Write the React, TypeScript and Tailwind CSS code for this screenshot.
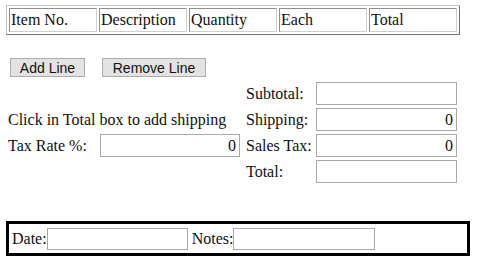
const headers = ["Item No.", "Description", "Quantity", "Each", "Total"];

function Box({ value = "", className = "" }: { value?: string; className?: string }) {
  return (
    <div
      className={`h-[23px] border border-[#a9a9a9] bg-white flex items-center justify-end pr-[3px] leading-none ${className}`}
    >
      {value}
    </div>
  );
}

export default function App() {
  return (
    <div className="w-[481px] h-[275px] bg-white text-[#111] font-['Liberation_Serif',serif] text-[16px] overflow-hidden">
      {/* Line items header */}
      <div className="pt-[5px] pl-[6px]">
        <div className="flex gap-[2px] p-[2px] w-[454px] border border-t-[#c4c4c4] border-l-[#c4c4c4] border-r-[#6f6f6f] border-b-[#6f6f6f]">
          {headers.map((h) => (
            <div
              key={h}
              className="w-[88px] h-[24px] border border-t-[#8e8e8e] border-l-[#8e8e8e] border-r-[#cfcfcf] border-b-[#cfcfcf] pl-[1px] flex items-center leading-none"
            >
              {h}
            </div>
          ))}
        </div>
      </div>

      {/* Buttons */}
      <div className="flex gap-[17px] pl-[10px] mt-[23px] font-['Liberation_Sans',sans-serif] text-[14px]">
        <button className="w-[75px] h-[19px] bg-[#e3e3e3] border border-[#adadad] flex items-center justify-center leading-none">
          Add Line
        </button>
        <button className="w-[104px] h-[19px] bg-[#e3e3e3] border border-[#adadad] flex items-center justify-center leading-none">
          Remove Line
        </button>
      </div>

      {/* Totals */}
      <div className="grid grid-cols-[92px_140px_76px_141px] gap-y-[3px] pl-[8px] mt-[5px] leading-none">
        <div className="col-span-2" />
        <div className="pl-[6px] flex items-center">Subtotal:</div>
        <Box />

        <div className="col-span-2 flex items-center">Click in Total box to add shipping</div>
        <div className="pl-[6px] flex items-center">Shipping:</div>
        <Box value="0" />

        <div className="flex items-center">Tax Rate %:</div>
        <Box value="0" />
        <div className="pl-[6px] flex items-center">Sales Tax:</div>
        <Box value="0" />

        <div className="col-span-2" />
        <div className="pl-[6px] flex items-center">Total:</div>
        <Box />
      </div>

      {/* Footer */}
      <div className="ml-[6px] mt-[38px] w-[464px] h-[35px] border-[3px] border-black flex items-center pl-[3px] leading-none">
        <span>Date:</span>
        <div className="w-[141px] h-[22px] border border-[#a9a9a9]" />
        <span className="ml-[4px]">Notes:</span>
        <div className="w-[142px] h-[22px] border border-[#a9a9a9]" />
      </div>
    </div>
  );
}
